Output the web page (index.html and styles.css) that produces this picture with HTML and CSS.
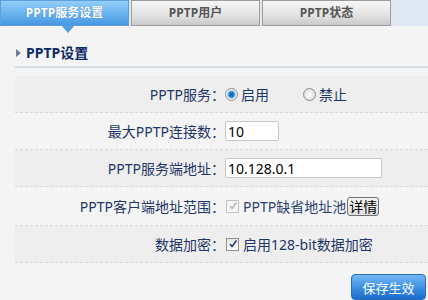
FILE: index.html
```html
<!DOCTYPE html>
<html lang="zh-CN">
<head>
    <meta charset="UTF-8">
    <meta name="viewport" content="width=device-width, initial-scale=1.0">
    <title>PPTP服务设置</title>
    <link rel="stylesheet" href="styles.css">
</head>
<body>
    <div class="tabs">
        <div class="tab active">PPTP服务设置</div>
        <div class="tab">PPTP用户</div>
        <div class="tab">PPTP状态</div>
    </div>

    <div class="content">
        <h2 class="section-title"><span class="title-arrow"></span>PPTP设置</h2>

        <div class="form">
            <div class="row alt">
                <div class="label">PPTP服务：</div>
                <div class="value">
                    <span class="option"><span class="radio checked"></span>启用</span>
                    <span class="option"><span class="radio"></span>禁止</span>
                </div>
            </div>
            <div class="row">
                <div class="label">最大PPTP连接数：</div>
                <div class="value">
                    <input type="text" class="text-input short" value="10">
                </div>
            </div>
            <div class="row alt">
                <div class="label">PPTP服务端地址：</div>
                <div class="value">
                    <input type="text" class="text-input long" value="10.128.0.1">
                </div>
            </div>
            <div class="row tall">
                <div class="label">PPTP客户端地址范围：</div>
                <div class="value">
                    <span class="checkbox disabled">
                        <svg width="10" height="10" viewBox="0 0 10 10"><path d="M2 5 L4 7.5 L8.5 1.5" fill="none" stroke="#b9b9b9" stroke-width="1.6"/></svg>
                    </span>
                    <span class="option-text muted">PPTP缺省地址池</span>
                    <button class="btn-detail">详情</button>
                </div>
            </div>
            <div class="row alt">
                <div class="label">数据加密：</div>
                <div class="value">
                    <span class="checkbox">
                        <svg width="10" height="10" viewBox="0 0 10 10"><path d="M2 5 L4 7.5 L8.5 1.5" fill="none" stroke="#2c3f7a" stroke-width="1.6"/></svg>
                    </span>
                    <span class="option-text">启用128-bit数据加密</span>
                </div>
            </div>
        </div>

        <div class="actions">
            <button class="btn-save">保存生效</button>
        </div>
    </div>
</body>
</html>
```

FILE: styles.css
```css
body {
    margin: 0;
    background: #f4f4f4;
    font-family: "Noto Sans", "Noto Sans CJK SC", sans-serif;
    font-size: 14px;
    color: #1f3566;
}

.tabs {
    display: flex;
    gap: 2px;
    height: 26px;
    background: #dfe8f3;
}

.tab {
    width: 129px;
    height: 26px;
    box-sizing: border-box;
    border: 1px solid #9d9d9d;
    background: linear-gradient(#f7f7f7, #e2e2e2 60%, #c9c9c9);
    color: #555;
    font-size: 12px;
    font-weight: bold;
    line-height: 23px;
    text-align: center;
}

.tab.active {
    position: relative;
    border-color: #5b9fdb;
    background: linear-gradient(#94cdf8, #6db4f0 50%, #4798e2);
    color: #fff;
    text-shadow: 0 0 1px #2f77c0;
}

.tab.active::after {
    content: "";
    position: absolute;
    left: 61px;
    bottom: -8px;
    border-left: 6px solid transparent;
    border-right: 6px solid transparent;
    border-top: 7px solid #4c9de4;
}

.content {
    padding-left: 15px;
}

.section-title {
    margin: 0 0 8px;
    padding: 17px 0 3px;
    line-height: 20px;
    font-size: 14px;
    font-weight: bold;
    color: #0d2a66;
    border-bottom: 2px solid #d5dde3;
}

.title-arrow {
    display: inline-block;
    vertical-align: middle;
    margin: -2px 5px 0 1px;
    border-left: 5px solid #6b7d98;
    border-top: 4px solid transparent;
    border-bottom: 4px solid transparent;
}

.row {
    display: flex;
    align-items: center;
    min-height: 36px;
    border-bottom: 1px dashed #d9d9d9;
}

.row.alt {
    background: #eeeeee;
}

.row.tall {
    min-height: 38px;
}

.label {
    width: 210px;
    text-align: right;
}

.value {
    display: flex;
    align-items: center;
}

.option {
    display: flex;
    align-items: center;
    margin-right: 34px;
}

.radio {
    width: 11px;
    height: 11px;
    border: 1px solid #8b8c8c;
    border-radius: 50%;
    margin-right: 3px;
    background: radial-gradient(circle, #ffffff 0, #dcdcdc 6px);
}

.radio.checked {
    background: radial-gradient(circle, #0b5fae 0, #1f80d0 2.5px, #7cb9ea 3.5px, #e6e6e6 4.5px, #ffffff 6px);
}

.text-input {
    height: 20px;
    box-sizing: border-box;
    border: 1px solid #c8c8c8;
    border-radius: 2px;
    padding: 0 2px;
    font-family: inherit;
    font-size: 14px;
    color: #000;
    background: #fff;
}

.text-input.short {
    width: 54px;
}

.text-input.long {
    width: 157px;
}

.checkbox {
    display: flex;
    align-items: center;
    justify-content: center;
    width: 11px;
    height: 11px;
    border: 1px solid #8f8f8f;
    background: linear-gradient(#e6e6e6, #ffffff);
    margin: 0 4px 0 1px;
}

.checkbox.disabled {
    border-color: #c4c4c4;
    background: #f6f6f6;
}

.option-text.muted {
    color: #2c4170;
}

.btn-detail {
    height: 19px;
    padding: 0 1px;
    margin-left: 1px;
    border: 1px solid #707070;
    border-radius: 3px;
    background: linear-gradient(#f4f4f4, #dedede);
    font-family: inherit;
    font-size: 14px;
    line-height: 15px;
    color: #000;
}

.actions {
    display: flex;
    justify-content: flex-end;
    padding: 11px 2px 0 0;
}

.btn-save {
    width: 75px;
    height: 26px;
    border: 1px solid #2d6cb7;
    border-radius: 4px;
    background: linear-gradient(#74b8f3, #3f92e4 50%, #1c6bcc);
    color: #fff;
    font-family: inherit;
    font-size: 13px;
    cursor: pointer;
}
```
